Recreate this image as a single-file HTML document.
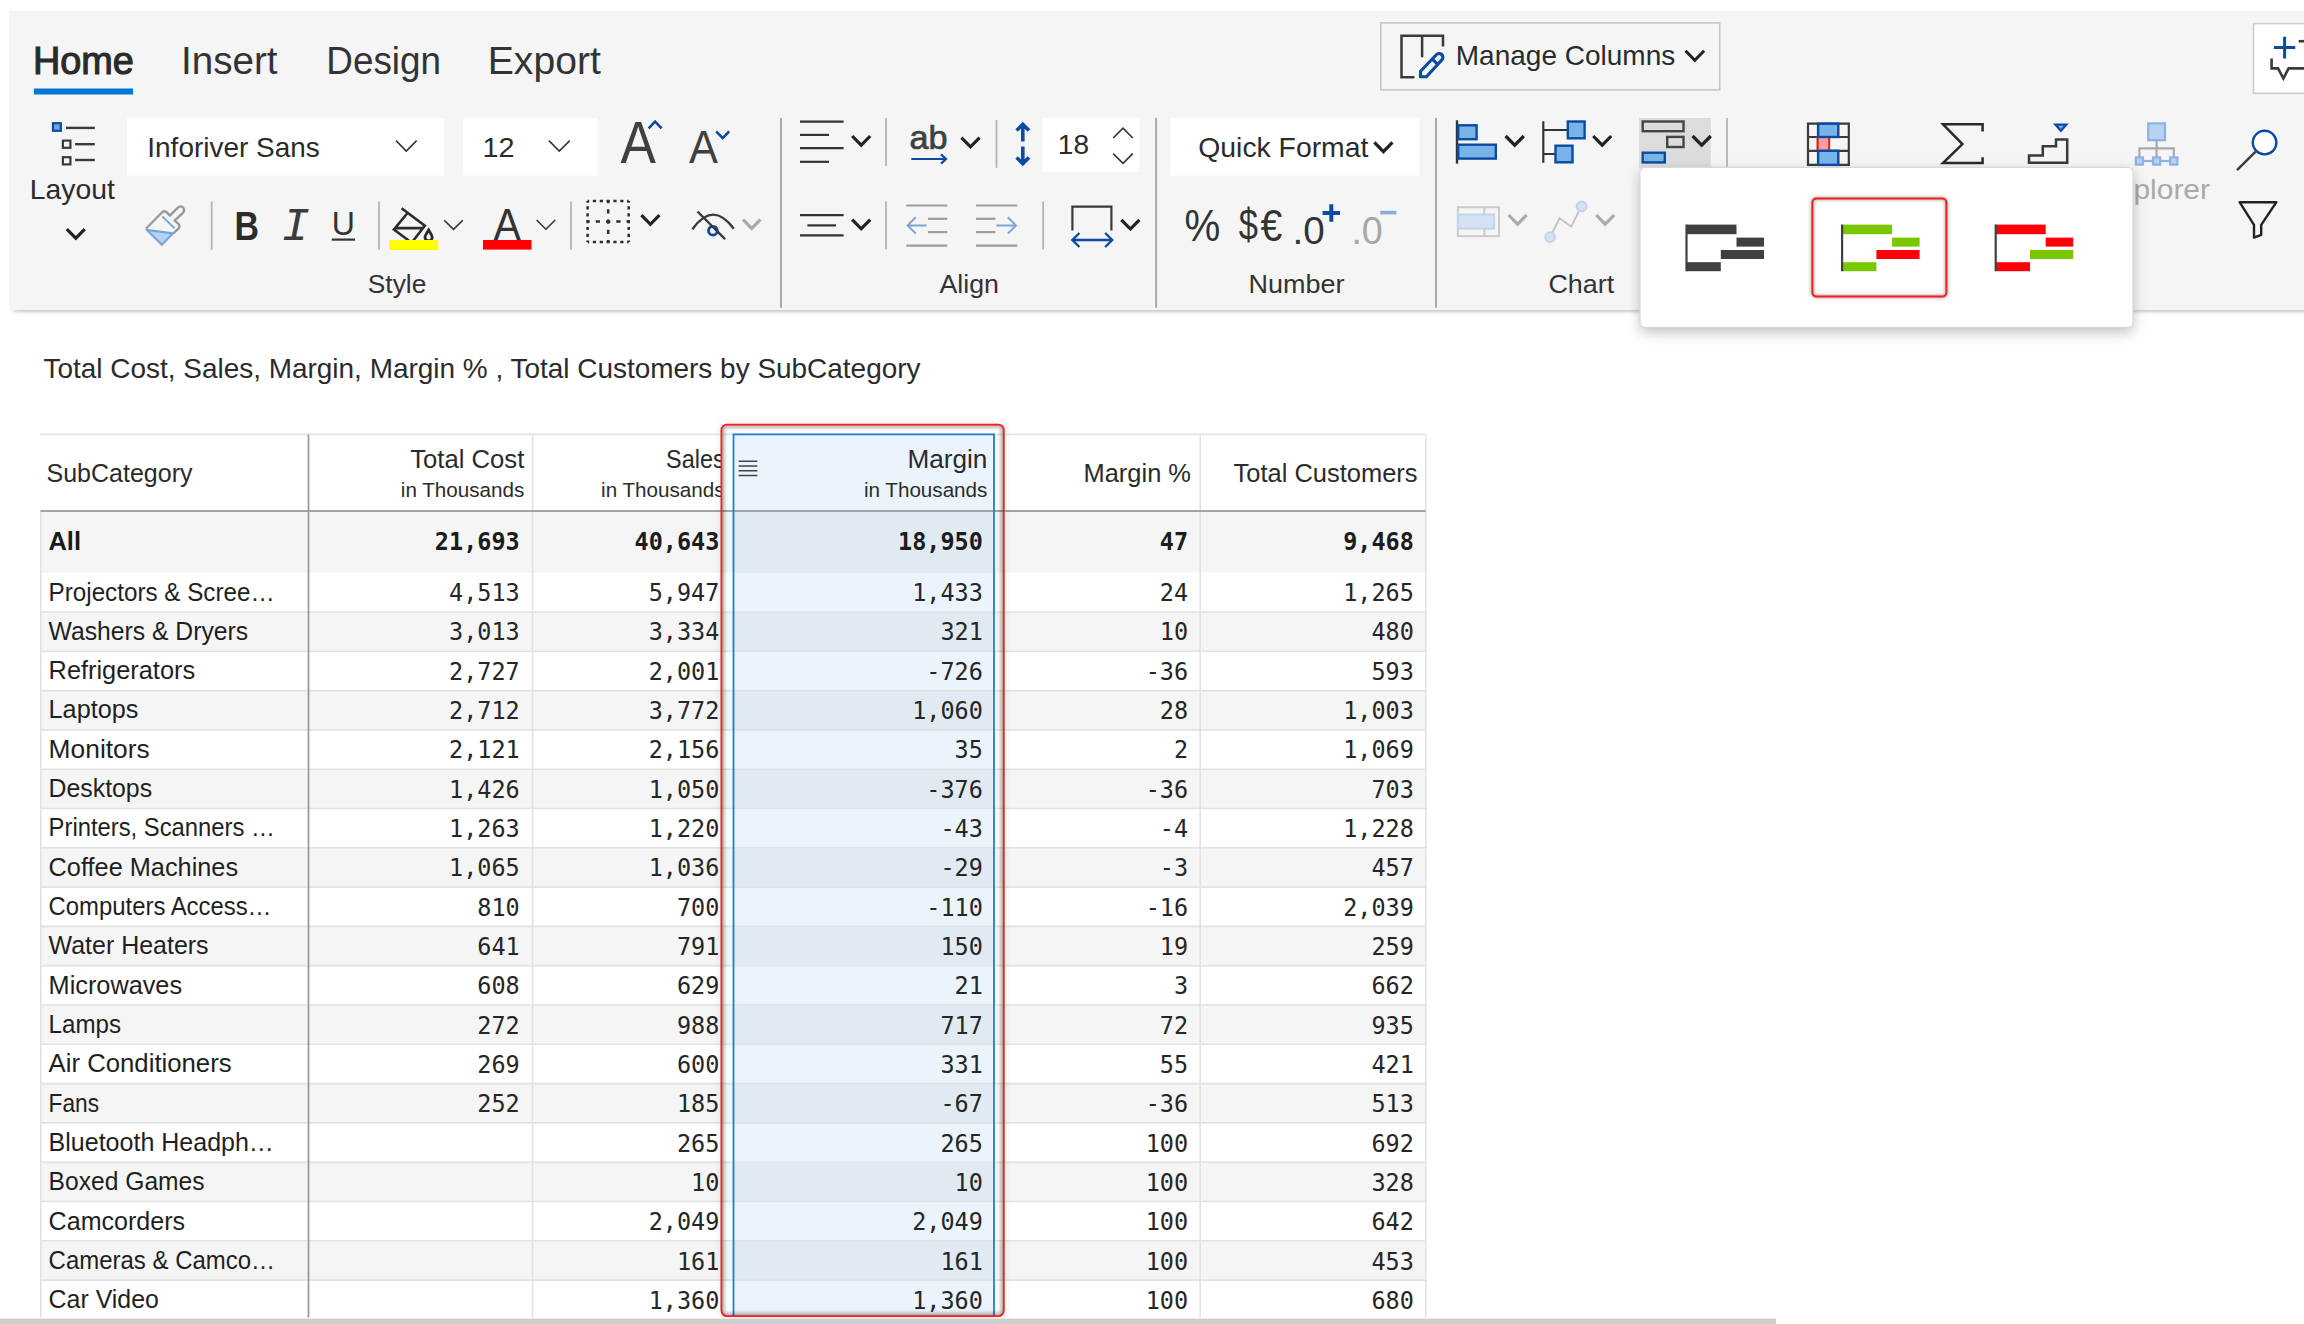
<!DOCTYPE html>
<html lang="en">
<head>
<meta charset="utf-8">
<title>Inforiver - Total Cost, Sales, Margin by SubCategory</title>
<style>
html,body{margin:0;padding:0;background:#fff;}
body{width:2304px;height:1324px;overflow:hidden;position:relative;font-family:'Liberation Sans', sans-serif;}
svg{position:absolute;left:0;top:0;display:block;font-family:'Liberation Sans', sans-serif;}
text{white-space:pre;}
</style>
</head>
<body>
<svg width="2304" height="1324" viewBox="0 0 2304 1324">
<defs>
<filter id="shPop" x="-10%" y="-20%" width="120%" height="150%"><feDropShadow dx="0" dy="5" stdDeviation="6.5" flood-color="#000" flood-opacity="0.25"/></filter>
<filter id="blur3" x="-20%" y="-5%" width="140%" height="110%"><feGaussianBlur stdDeviation="3"/></filter>
<filter id="blurSh" x="-2%" y="-100%" width="104%" height="300%"><feGaussianBlur stdDeviation="2.6"/></filter>
<clipPath id="clipShadow"><rect x="0" y="310" width="2304" height="20"/></clipPath>
<clipPath id="clipTable"><rect x="0" y="400" width="2304" height="917.4"/></clipPath>
<filter id="blur2" x="-20%" y="-20%" width="140%" height="140%"><feGaussianBlur stdDeviation="1.8"/></filter>
<clipPath id="clipSel"><rect x="721.4" y="424.6" width="282.4" height="891.5" rx="5.5"/></clipPath>
<clipPath id="clipSales"><rect x="533" y="436" width="188.6" height="74"/></clipPath>
<clipPath id="clipExplorer"><rect x="2100" y="100" width="204" height="210"/></clipPath>
</defs>
<g id="ribbon">
<g clip-path="url(#clipShadow)"><rect x="14" y="290" width="2300" height="20" fill="#000" fill-opacity="0.5" filter="url(#blurSh)"/></g>
<rect x="8.7" y="10.9" width="2300" height="299.3" fill="#f5f5f5"/>
<g id="tabs">
<text x="32.9" y="73.6" font-size="39" fill="#2a2a2a" textLength="101" lengthAdjust="spacingAndGlyphs" stroke="#2a2a2a" stroke-width="1.1">Home</text>
<rect x="34.00" y="88.50" width="99.00" height="6.00" fill="#0078d4" />
<text x="181" y="73.6" font-size="39" fill="#333" textLength="96.5" lengthAdjust="spacingAndGlyphs">Insert</text>
<text x="326.3" y="73.6" font-size="39" fill="#333" textLength="114.7" lengthAdjust="spacingAndGlyphs">Design</text>
<text x="487.8" y="73.6" font-size="39" fill="#333" textLength="113" lengthAdjust="spacingAndGlyphs">Export</text>
</g>
<g id="manage-columns">
<rect x="1380.8" y="22.9" width="338.9" height="67" fill="#f5f5f5" stroke="#c6c6c6" stroke-width="1.6"/>
<path d="M1414.4 77.2 H1401.5 V35.7 H1443 V46.6 M1422.1 35.7 V57.2" fill="none" stroke="#3a3a3a" stroke-width="2.5"/>
<path d="M1436.3 54.7 L1420.6 71.3 L1420.4 76.8 L1426.4 76.8 L1441.9 59.9 A3.8 3.8 0 0 0 1436.3 54.7 Z M1432 58.8 L1437.8 64.4" fill="none" stroke="#0b4aa2" stroke-width="3.1" stroke-linejoin="round"/>
<text x="1455.8" y="65.1" font-size="27.8" fill="#2b2b2b" textLength="219.4" lengthAdjust="spacingAndGlyphs">Manage Columns</text>
<polyline points="1685.5,50.8 1694.8,60.3 1704.1,50.8" fill="none" stroke="#222" stroke-width="3"/>
</g>
<g id="comment-btn">
<rect x="2253.5" y="23.6" width="80" height="69.7" fill="#fff" stroke="#cccccc" stroke-width="1.6"/>
<path d="M2273.9 47.6 H2295.2 M2284.6 36.7 V58.5" fill="none" stroke="#0b4aa2" stroke-width="3"/>
<path d="M2298.7 41.2 H2310" fill="none" stroke="#3a3a3a" stroke-width="2.6"/>
<path d="M2271.6 58.5 V68.4 H2278 L2283.4 78.4 L2288.6 68.4 H2310" fill="none" stroke="#3a3a3a" stroke-width="2.6"/>
</g>
<g id="layout-btn">
<rect x="53" y="123.2" width="7.8" height="7.6" fill="#6aa6ea" stroke="#0b4aa2" stroke-width="2.2"/>
<line x1="66.00" y1="127.90" x2="94.80" y2="127.90" stroke="#3a3a3a" stroke-width="2.4" />
<rect x="62.9" y="140.6" width="7.5" height="7.2" fill="none" stroke="#3a3a3a" stroke-width="2.2"/>
<line x1="75.10" y1="144.20" x2="94.80" y2="144.20" stroke="#3a3a3a" stroke-width="2.4" />
<rect x="62.9" y="157.2" width="7.5" height="7.2" fill="none" stroke="#3a3a3a" stroke-width="2.2"/>
<line x1="75.10" y1="160.00" x2="94.80" y2="160.00" stroke="#3a3a3a" stroke-width="2.4" />
<text x="29.8" y="199.2" font-size="27.8" fill="#2b2b2b" textLength="85" lengthAdjust="spacingAndGlyphs">Layout</text>
<polyline points="66.8,229.2 75.8,238.2 84.8,229.2" fill="none" stroke="#222" stroke-width="3.2"/>
</g>
<g id="style-group">
<rect x="127.10" y="118.00" width="316.90" height="57.60" fill="#fff" />
<text x="147.3" y="157" font-size="27.8" fill="#2b2b2b" textLength="172.5" lengthAdjust="spacingAndGlyphs">Inforiver Sans</text>
<polyline points="396.0,140.6 406.3,151.0 416.6,140.6" fill="none" stroke="#333" stroke-width="1.6"/>
<rect x="463.30" y="118.00" width="134.00" height="57.60" fill="#fff" />
<text x="482.5" y="157" font-size="27.8" fill="#2b2b2b" textLength="32" lengthAdjust="spacingAndGlyphs">12</text>
<polyline points="548.9,140.6 559.3,151.0 569.7,140.6" fill="none" stroke="#333" stroke-width="1.6"/>
<text x="620.6" y="162.6" font-size="59.6" fill="#404040" textLength="35.4" lengthAdjust="spacingAndGlyphs">A</text>
<polyline points="648.6,128.4 655.1,121.6 661.6,128.4" fill="none" stroke="#0b4aa2" stroke-width="2.6"/>
<text x="689" y="162.6" font-size="46" fill="#404040" textLength="28.9" lengthAdjust="spacingAndGlyphs">A</text>
<polyline points="716.2,131.4 722.7,138.2 729.2,131.4" fill="none" stroke="#0b4aa2" stroke-width="2.6"/>
<g id="format-painter" fill="none" stroke-linejoin="round">
<path d="M145.9 228.8 L162.4 212 Q164.6 210.2 166.8 212.4 L169.8 215.6 L177.9 207.6 A3.6 3.6 0 0 1 183.1 212.6 L174.6 220.6 L178.2 223.6 Q180.6 226 178.6 228.4 L173.4 233.4" stroke="#989898" stroke-width="2.3"/>
<path d="M146.6 229.8 L172.8 233.4 L161.8 244.8 Z" fill="#b5d4f1" stroke="#7ba4d8" stroke-width="2.2"/>
<path d="M162.3 216.4 L174.5 228.2" stroke="#7ba4d8" stroke-width="2"/>
</g>
<line x1="211.70" y1="201.50" x2="211.70" y2="249.70" stroke="#b4b4b4" stroke-width="1.8" />
<text x="234.6" y="239.9" font-size="41.5" fill="#2b2b2b" font-weight="700" textLength="24.5" lengthAdjust="spacingAndGlyphs">B</text>
<text x="281.6" y="240.4" font-size="47" fill="#3c3c3c" font-family="'Liberation Mono', monospace" font-style="italic">I</text>
<text x="331.8" y="234.6" font-size="33.4" fill="#333" textLength="23.2" lengthAdjust="spacingAndGlyphs">U</text>
<line x1="331.80" y1="239.60" x2="355.00" y2="239.60" stroke="#333" stroke-width="2.2" />
<line x1="379.00" y1="201.50" x2="379.00" y2="249.70" stroke="#b4b4b4" stroke-width="1.8" />
<g id="fill-color" fill="none" stroke="#2c2c2c" stroke-width="2.6">
<path d="M401.6 208.2 L424.8 225.8 L412.6 241.5 M407.1 213.5 L393.9 229.6 L410 241.5 M395.4 228.1 H422.6"/>
<path d="M428.6 230 C426.4 233.6 425 235.6 425 237.2 A3.6 3.6 0 0 0 432.2 237.2 C432.2 235.6 430.8 233.6 428.6 230 Z" stroke-width="2.8"/>
</g>
<rect x="389.30" y="240.00" width="49.00" height="10.00" fill="#ffff00" />
<polyline points="444.2,220.2 453.5,229.4 462.8,220.2" fill="none" stroke="#333" stroke-width="1.6"/>
<text x="493.6" y="240.2" font-size="44.6" fill="#333" textLength="27.4" lengthAdjust="spacingAndGlyphs">A</text>
<rect x="483.00" y="240.00" width="48.50" height="9.60" fill="#ff0000" />
<polyline points="536.6,220.0 545.9,229.2 555.2,220.0" fill="none" stroke="#333" stroke-width="1.6"/>
<line x1="571.00" y1="201.50" x2="571.00" y2="249.70" stroke="#b4b4b4" stroke-width="1.8" />
<g id="borders" fill="none" stroke="#2c2c2c" stroke-width="2.5">
<path d="M587.6 201.1 H628.7 M587.6 242.1 H628.7 M587.6 201.1 V242.1 M628.7 201.1 V242.1" stroke-dasharray="3.2 3.65" stroke-dashoffset="1.6"/>
<path d="M608.2 201.1 V242.1 M587.6 221.4 H628.7" stroke-dasharray="4.2 6.07" stroke-dashoffset="2.1"/>
</g>
<polyline points="641.4,215.2 650.4,224.3 659.4,215.2" fill="none" stroke="#222" stroke-width="3.2"/>
<g id="hide" fill="none" stroke="#3a3a3a" stroke-width="2.4">
<circle cx="712.9" cy="230.7" r="4.4" stroke="#0b4aa2" stroke-width="2.8"/>
<path d="M692.4 229.2 Q713 200.2 733.8 228.8"/>
<path d="M697.5 211.5 L725.1 239.2"/>
</g>
<polyline points="743.0,219.6 751.7,228.4 760.4,219.6" fill="none" stroke="#aaaaaa" stroke-width="3.2"/>
<text x="367.8" y="292.5" font-size="25.6" fill="#333" textLength="58.5" lengthAdjust="spacingAndGlyphs">Style</text>
</g>
<line x1="781.00" y1="118.00" x2="781.00" y2="307.80" stroke="#aaaaaa" stroke-width="2" />
<g id="align-group">
<line x1="800.00" y1="121.60" x2="843.60" y2="121.60" stroke="#333" stroke-width="2.2" />
<line x1="800.00" y1="134.90" x2="829.00" y2="134.90" stroke="#333" stroke-width="2.2" />
<line x1="800.00" y1="148.20" x2="843.60" y2="148.20" stroke="#333" stroke-width="2.2" />
<line x1="800.00" y1="161.80" x2="829.00" y2="161.80" stroke="#333" stroke-width="2.2" />
<polyline points="852.2,136.0 861.2,145.2 870.2,136.0" fill="none" stroke="#222" stroke-width="3.2"/>
<line x1="886.00" y1="118.00" x2="886.00" y2="166.00" stroke="#b4b4b4" stroke-width="1.8" />
<text x="909.6" y="149.4" font-size="33" fill="#404040" textLength="38" lengthAdjust="spacingAndGlyphs" stroke="#404040" stroke-width="0.7">ab</text>
<path d="M911.3 159 H945.8 M941 154.4 L946 159 L941 163.6" fill="none" stroke="#0b4aa2" stroke-width="2.2"/>
<polyline points="961.4,137.6 970.5,146.8 979.6,137.6" fill="none" stroke="#222" stroke-width="3.2"/>
<line x1="996.50" y1="120.00" x2="996.50" y2="167.80" stroke="#b4b4b4" stroke-width="1.8" />
<path d="M1022.8 141.6 V126 M1016.6 130.6 L1022.8 124.4 L1029 130.6 M1022.8 146.6 V162 M1016.6 157.4 L1022.8 163.6 L1029 157.4" fill="none" stroke="#0b4aa2" stroke-width="3.6"/>
<rect x="1042.30" y="118.00" width="97.10" height="53.70" fill="#fff" />
<text x="1057.8" y="154.2" font-size="27.4" fill="#2b2b2b" textLength="31.2" lengthAdjust="spacingAndGlyphs">18</text>
<polyline points="1113.2,138.0 1123.0,128.2 1132.8,138.0" fill="none" stroke="#333" stroke-width="1.6"/>
<polyline points="1113.2,153.6 1123.0,163.4 1132.8,153.6" fill="none" stroke="#333" stroke-width="1.6"/>
<line x1="800.00" y1="215.20" x2="843.60" y2="215.20" stroke="#333" stroke-width="2.2" />
<line x1="807.40" y1="225.40" x2="836.00" y2="225.40" stroke="#333" stroke-width="2.2" />
<line x1="800.00" y1="235.40" x2="843.60" y2="235.40" stroke="#333" stroke-width="2.2" />
<polyline points="852.2,219.6 861.2,228.8 870.2,219.6" fill="none" stroke="#222" stroke-width="3.2"/>
<line x1="886.00" y1="201.40" x2="886.00" y2="249.60" stroke="#b4b4b4" stroke-width="1.8" />
<line x1="906.30" y1="205.50" x2="947.30" y2="205.50" stroke="#9d9d9d" stroke-width="2.2" />
<line x1="927.90" y1="218.80" x2="947.30" y2="218.80" stroke="#9d9d9d" stroke-width="2.2" />
<line x1="927.90" y1="232.10" x2="947.30" y2="232.10" stroke="#9d9d9d" stroke-width="2.2" />
<line x1="906.30" y1="245.70" x2="947.30" y2="245.70" stroke="#9d9d9d" stroke-width="2.2" />
<path d="M926.6 225.4 H908 M915.8 217.2 L907.6 225.4 L915.8 233.6" fill="none" stroke="#7fa3d8" stroke-width="2"/>
<line x1="976.00" y1="205.50" x2="1017.30" y2="205.50" stroke="#9d9d9d" stroke-width="2.2" />
<line x1="976.00" y1="218.80" x2="995.40" y2="218.80" stroke="#9d9d9d" stroke-width="2.2" />
<line x1="976.00" y1="232.10" x2="995.40" y2="232.10" stroke="#9d9d9d" stroke-width="2.2" />
<line x1="976.00" y1="245.70" x2="1017.30" y2="245.70" stroke="#9d9d9d" stroke-width="2.2" />
<path d="M996.4 225.4 H1015.6 M1007.8 217.2 L1016 225.4 L1007.8 233.6" fill="none" stroke="#7fa3d8" stroke-width="2"/>
<line x1="1043.10" y1="201.40" x2="1043.10" y2="249.60" stroke="#b4b4b4" stroke-width="1.8" />
<path d="M1072.4 230.4 V206.6 H1111.4 V230.4" fill="none" stroke="#3a3a3a" stroke-width="2.2"/>
<path d="M1072.6 240 H1112 M1079.4 233 L1072.4 240 L1079.4 247 M1105.2 233 L1112.2 240 L1105.2 247" fill="none" stroke="#0b4aa2" stroke-width="2.4"/>
<polyline points="1121.4,219.8 1130.4,229.0 1139.4,219.8" fill="none" stroke="#222" stroke-width="3.2"/>
<text x="939.5" y="292.5" font-size="25.6" fill="#333" textLength="59.5" lengthAdjust="spacingAndGlyphs">Align</text>
</g>
<line x1="1156.10" y1="118.00" x2="1156.10" y2="307.80" stroke="#aaaaaa" stroke-width="2" />
<g id="number-group">
<rect x="1170.40" y="118.00" width="248.80" height="57.60" fill="#fff" />
<text x="1198.3" y="156.5" font-size="27.8" fill="#2b2b2b" textLength="170" lengthAdjust="spacingAndGlyphs">Quick Format</text>
<polyline points="1374.4,142.4 1383.4,151.6 1392.4,142.4" fill="none" stroke="#222" stroke-width="3.2"/>
<text x="1184.6" y="241.3" font-size="43.6" fill="#333" textLength="35.8" lengthAdjust="spacingAndGlyphs">%</text>
<text x="1238.8" y="239.6" font-size="44.5" fill="#333" textLength="19.2" lengthAdjust="spacingAndGlyphs">$</text>
<text x="1260.6" y="241.3" font-size="43.6" fill="#333" textLength="21.8" lengthAdjust="spacingAndGlyphs">€</text>
<text x="1292.6" y="243.6" font-size="38.5" fill="#333" textLength="32.2" lengthAdjust="spacingAndGlyphs">.0</text>
<path d="M1322.6 213 H1340 M1331.3 204.3 V221.8" fill="none" stroke="#0b4aa2" stroke-width="4"/>
<text x="1351.4" y="243.6" font-size="38.5" fill="#a6a6a6" textLength="31.4" lengthAdjust="spacingAndGlyphs">.0</text>
<line x1="1380.30" y1="212.60" x2="1396.40" y2="212.60" stroke="#8cabdc" stroke-width="3.6" />
<text x="1248.6" y="292.5" font-size="25.6" fill="#333" textLength="96" lengthAdjust="spacingAndGlyphs">Number</text>
</g>
<line x1="1436.00" y1="118.00" x2="1436.00" y2="307.80" stroke="#aaaaaa" stroke-width="2" />
<g id="chart-group">
<line x1="1457.00" y1="120.30" x2="1457.00" y2="163.60" stroke="#333" stroke-width="2.4" />
<rect x="1458.2" y="125.3" width="18.4" height="13.9" fill="#78b3e8" stroke="#0b4aa2" stroke-width="2.4"/>
<rect x="1458.2" y="144.7" width="37.6" height="13.9" fill="#78b3e8" stroke="#0b4aa2" stroke-width="2.4"/>
<polyline points="1505.6,136.0 1514.7,145.2 1523.8,136.0" fill="none" stroke="#222" stroke-width="3.2"/>
<path d="M1543.3 121.3 V162.8 M1543.3 130 H1567 M1543.3 154 H1555" fill="none" stroke="#333" stroke-width="2.2"/>
<rect x="1567.8" y="121.5" width="16.8" height="16.8" fill="#78b3e8" stroke="#0b4aa2" stroke-width="2.4"/>
<rect x="1555.5" y="145.7" width="17" height="16.6" fill="#78b3e8" stroke="#0b4aa2" stroke-width="2.4"/>
<polyline points="1593.2,136.0 1602.2,145.2 1611.2,136.0" fill="none" stroke="#222" stroke-width="3.2"/>
<rect x="1639.00" y="118.00" width="71.80" height="50.00" fill="#dcdcdc" />
<rect x="1642.7" y="121.5" width="40.8" height="9.7" fill="none" stroke="#444" stroke-width="2.4"/>
<rect x="1667.2" y="136.9" width="16.3" height="10.1" fill="none" stroke="#444" stroke-width="2.4"/>
<rect x="1642.7" y="152.7" width="22.1" height="9.7" fill="#78b3e8" stroke="#0b4aa2" stroke-width="2.4"/>
<polyline points="1692.6,136.0 1701.7,145.2 1710.8,136.0" fill="none" stroke="#222" stroke-width="3.2"/>
<line x1="1727.00" y1="118.00" x2="1727.00" y2="170.00" stroke="#b4b4b4" stroke-width="1.8" />
<rect x="1457.9" y="207.3" width="41.1" height="28.8" fill="none" stroke="#cbcbcb" stroke-width="2"/>
<line x1="1484.30" y1="207.30" x2="1484.30" y2="236.10" stroke="#cbcbcb" stroke-width="2" />
<rect x="1457.9" y="214.5" width="36.2" height="14.1" fill="#d3e3f4" stroke="#c3d3ec" stroke-width="2"/>
<polyline points="1508.6,215.0 1517.6,224.2 1526.6,215.0" fill="none" stroke="#aaaaaa" stroke-width="3.2"/>
<polyline points="1550.1,237.1 1559.6,218.3 1571.2,226.6 1581.5,206.3" fill="none" stroke="#c4c4c4" stroke-width="2"/>
<circle cx="1550.1" cy="237.1" r="4.9" fill="#d3e3f4" stroke="#c3d3ec" stroke-width="2"/>
<circle cx="1581.5" cy="206.3" r="4.9" fill="#d3e3f4" stroke="#c3d3ec" stroke-width="2"/>
<polyline points="1596.2,215.0 1605.2,224.2 1614.2,215.0" fill="none" stroke="#aaaaaa" stroke-width="3.2"/>
<text x="1548.4" y="292.5" font-size="25.6" fill="#333" textLength="65.8" lengthAdjust="spacingAndGlyphs">Chart</text>
</g>
<g id="right-icons">
<rect x="1817.4" y="138" width="12" height="11.8" fill="#ff9ca4"/>
<line x1="1817.60" y1="138.00" x2="1817.60" y2="149.80" stroke="#d4261c" stroke-width="2.2" />
<line x1="1829.20" y1="138.00" x2="1829.20" y2="149.80" stroke="#d4261c" stroke-width="2" />
<path d="M1808 123.7 H1848.8 V164.9 H1808 Z M1808 137 H1848.8 M1808 150.8 H1848.8" fill="none" stroke="#3a3a3a" stroke-width="2.2"/>
<rect x="1818.1" y="123.7" width="20.2" height="13.3" fill="#78b3e8" stroke="#0b4aa2" stroke-width="2.4"/>
<rect x="1818.1" y="150.8" width="20.2" height="14.1" fill="#78b3e8" stroke="#0b4aa2" stroke-width="2.4"/>
<path d="M1982.6 131.6 V124.3 H1943 L1962.4 144.1 L1943 163.1 H1982.6 V157.2" fill="none" stroke="#2a2a2a" stroke-width="2.5" stroke-linejoin="miter"/>
<path d="M2029 162.7 V155.4 H2042.8 V146.2 H2056 V139.4 H2067.2 V162.7 Z" fill="none" stroke="#3a3a3a" stroke-width="2.5"/>
<path d="M2055.4 124.6 H2066.4 L2060.9 130.8 Z" fill="#78b3e8" stroke="#0b4aa2" stroke-width="2.2"/>
<path d="M2156.6 141 V157 M2139.4 157 V148.4 H2173.8 V157" fill="none" stroke="#a9a9a9" stroke-width="2.2"/>
<path d="M2143 161 H2170" fill="none" stroke="#8fb1e0" stroke-width="2.2"/>
<rect x="2148.2" y="123.4" width="16.8" height="16.8" fill="#b5d3f2" stroke="#8fb1e0" stroke-width="2.2"/>
<rect x="2135.8" y="157.4" width="7.2" height="7.2" fill="#b5d3f2" stroke="#8fb1e0" stroke-width="2.2"/>
<rect x="2153.0" y="157.4" width="7.2" height="7.2" fill="#b5d3f2" stroke="#8fb1e0" stroke-width="2.2"/>
<rect x="2170.2000000000003" y="157.4" width="7.2" height="7.2" fill="#b5d3f2" stroke="#8fb1e0" stroke-width="2.2"/>
<g clip-path="url(#clipExplorer)">
<text x="2098.5" y="198.9" font-size="27.8" fill="#a9a9a9" textLength="111.5" lengthAdjust="spacingAndGlyphs">Explorer</text>
</g>
<path d="M2255.6 151.6 L2237 170.2" fill="none" stroke="#3a3a3a" stroke-width="2.4"/>
<circle cx="2264.6" cy="142.6" r="11.8" fill="#fff" stroke="#0b4aa2" stroke-width="2.4"/>
<path d="M2239.6 202.2 H2276.4 L2261.2 224.8 V234.8 L2254 237.6 V224.8 Z" fill="none" stroke="#222" stroke-width="2.4" stroke-linejoin="round"/>
</g>
</g>
<g id="waterfall-popup">
<rect x="1640" y="167.3" width="493" height="160" rx="5" fill="#fff" filter="url(#shPop)"/>
<rect x="1640" y="167.3" width="493" height="160" rx="5" fill="#fff" stroke="#d9d9d9" stroke-width="1.2"/>
<rect x="1686.20" y="224.60" width="50.30" height="9.60" fill="#404040" />
<rect x="1736.50" y="237.60" width="27.50" height="9.00" fill="#404040" />
<rect x="1720.80" y="250.00" width="43.20" height="9.00" fill="#404040" />
<rect x="1686.20" y="262.20" width="34.60" height="9.00" fill="#404040" />
<rect x="1685.40" y="224.60" width="2.20" height="46.60" fill="#404040" />
<rect x="1812.4" y="198.6" width="134" height="98" rx="4" fill="#fff" stroke="#000" stroke-opacity="0.3" stroke-width="4" filter="url(#blur2)"/>
<rect x="1812.4" y="198.6" width="134" height="98" rx="4" fill="none" stroke="#fb1c1c" stroke-width="2"/>
<rect x="1841.80" y="224.60" width="50.30" height="9.60" fill="#7ac700" />
<rect x="1892.10" y="237.60" width="27.50" height="9.00" fill="#7ac700" />
<rect x="1876.40" y="250.00" width="43.20" height="9.00" fill="#ff0008" />
<rect x="1841.80" y="262.20" width="34.60" height="9.00" fill="#7ac700" />
<rect x="1841.00" y="224.60" width="2.20" height="46.60" fill="#404040" />
<rect x="1995.40" y="224.60" width="50.30" height="9.60" fill="#ff0008" />
<rect x="2045.70" y="237.60" width="27.50" height="9.00" fill="#ff0008" />
<rect x="2030.00" y="250.00" width="43.20" height="9.00" fill="#7ac700" />
<rect x="1995.40" y="262.20" width="34.60" height="9.00" fill="#ff0008" />
<rect x="1994.60" y="224.60" width="2.20" height="46.60" fill="#404040" />
</g>
<g id="title">
<text x="43.5" y="377.9" font-size="27.4" fill="#2b2b2b" textLength="877" lengthAdjust="spacingAndGlyphs">Total Cost, Sales, Margin, Margin % , Total Customers by SubCategory</text>
</g>
<g id="table" clip-path="url(#clipTable)">
<rect x="40.40" y="511.00" width="1385.40" height="61.70" fill="#f5f5f5" />
<rect x="40.40" y="612.00" width="1385.40" height="39.30" fill="#f5f5f5" />
<rect x="40.40" y="690.60" width="1385.40" height="39.30" fill="#f5f5f5" />
<rect x="40.40" y="769.20" width="1385.40" height="39.30" fill="#f5f5f5" />
<rect x="40.40" y="847.80" width="1385.40" height="39.30" fill="#f5f5f5" />
<rect x="40.40" y="926.40" width="1385.40" height="39.30" fill="#f5f5f5" />
<rect x="40.40" y="1005.00" width="1385.40" height="39.30" fill="#f5f5f5" />
<rect x="40.40" y="1083.60" width="1385.40" height="39.30" fill="#f5f5f5" />
<rect x="40.40" y="1162.20" width="1385.40" height="39.30" fill="#f5f5f5" />
<rect x="40.40" y="1240.80" width="1385.40" height="39.30" fill="#f5f5f5" />
<rect x="733.50" y="434.40" width="260.50" height="889.60" fill="rgba(0,120,212,0.08)" />
<line x1="40.40" y1="434.40" x2="1425.80" y2="434.40" stroke="#e2e2e2" stroke-width="1.6" />
<line x1="40.40" y1="612.00" x2="1425.80" y2="612.00" stroke="#e2e2e2" stroke-width="1.6" />
<line x1="40.40" y1="651.30" x2="1425.80" y2="651.30" stroke="#e2e2e2" stroke-width="1.6" />
<line x1="40.40" y1="690.60" x2="1425.80" y2="690.60" stroke="#e2e2e2" stroke-width="1.6" />
<line x1="40.40" y1="729.90" x2="1425.80" y2="729.90" stroke="#e2e2e2" stroke-width="1.6" />
<line x1="40.40" y1="769.20" x2="1425.80" y2="769.20" stroke="#e2e2e2" stroke-width="1.6" />
<line x1="40.40" y1="808.50" x2="1425.80" y2="808.50" stroke="#e2e2e2" stroke-width="1.6" />
<line x1="40.40" y1="847.80" x2="1425.80" y2="847.80" stroke="#e2e2e2" stroke-width="1.6" />
<line x1="40.40" y1="887.10" x2="1425.80" y2="887.10" stroke="#e2e2e2" stroke-width="1.6" />
<line x1="40.40" y1="926.40" x2="1425.80" y2="926.40" stroke="#e2e2e2" stroke-width="1.6" />
<line x1="40.40" y1="965.70" x2="1425.80" y2="965.70" stroke="#e2e2e2" stroke-width="1.6" />
<line x1="40.40" y1="1005.00" x2="1425.80" y2="1005.00" stroke="#e2e2e2" stroke-width="1.6" />
<line x1="40.40" y1="1044.30" x2="1425.80" y2="1044.30" stroke="#e2e2e2" stroke-width="1.6" />
<line x1="40.40" y1="1083.60" x2="1425.80" y2="1083.60" stroke="#e2e2e2" stroke-width="1.6" />
<line x1="40.40" y1="1122.90" x2="1425.80" y2="1122.90" stroke="#e2e2e2" stroke-width="1.6" />
<line x1="40.40" y1="1162.20" x2="1425.80" y2="1162.20" stroke="#e2e2e2" stroke-width="1.6" />
<line x1="40.40" y1="1201.50" x2="1425.80" y2="1201.50" stroke="#e2e2e2" stroke-width="1.6" />
<line x1="40.40" y1="1240.80" x2="1425.80" y2="1240.80" stroke="#e2e2e2" stroke-width="1.6" />
<line x1="40.40" y1="1280.10" x2="1425.80" y2="1280.10" stroke="#e2e2e2" stroke-width="1.6" />
<line x1="40.40" y1="1319.40" x2="1425.80" y2="1319.40" stroke="#e2e2e2" stroke-width="1.6" />
<line x1="40.80" y1="511.00" x2="40.80" y2="1324.00" stroke="#e2e2e2" stroke-width="1.6" />
<line x1="532.60" y1="434.40" x2="532.60" y2="1324.00" stroke="#e2e2e2" stroke-width="1.6" />
<line x1="1200.20" y1="434.40" x2="1200.20" y2="1324.00" stroke="#e2e2e2" stroke-width="1.6" />
<line x1="1425.80" y1="434.40" x2="1425.80" y2="1324.00" stroke="#e2e2e2" stroke-width="1.6" />
<line x1="308.50" y1="434.40" x2="308.50" y2="1324.00" stroke="#9c9c9c" stroke-width="1.8" />
<line x1="40.40" y1="511.00" x2="1425.80" y2="511.00" stroke="#a3a3a3" stroke-width="2" />
<text x="46.5" y="481.6" font-size="25" fill="#2b2b2b" textLength="146" lengthAdjust="spacingAndGlyphs">SubCategory</text>
<text x="524.3" y="467.7" font-size="25" fill="#2b2b2b" text-anchor="end" textLength="114" lengthAdjust="spacingAndGlyphs">Total Cost</text>
<text x="524.3" y="496.6" font-size="19.3" fill="#2b2b2b" text-anchor="end" textLength="123.5" lengthAdjust="spacingAndGlyphs">in Thousands</text>
<g clip-path="url(#clipSales)">
<text x="724.6" y="467.7" font-size="25" fill="#2b2b2b" text-anchor="end" textLength="58.5" lengthAdjust="spacingAndGlyphs">Sales</text>
<text x="724.6" y="496.6" font-size="19.3" fill="#2b2b2b" text-anchor="end" textLength="123.5" lengthAdjust="spacingAndGlyphs">in Thousands</text>
</g>
<text x="987.4" y="467.7" font-size="25" fill="#2b2b2b" text-anchor="end" textLength="80" lengthAdjust="spacingAndGlyphs">Margin</text>
<text x="987.4" y="496.6" font-size="19.3" fill="#2b2b2b" text-anchor="end" textLength="123.5" lengthAdjust="spacingAndGlyphs">in Thousands</text>
<text x="1191" y="481.6" font-size="25" fill="#2b2b2b" text-anchor="end" textLength="107.5" lengthAdjust="spacingAndGlyphs">Margin %</text>
<text x="1417.6" y="481.6" font-size="25" fill="#2b2b2b" text-anchor="end" textLength="184" lengthAdjust="spacingAndGlyphs">Total Customers</text>
<line x1="738.60" y1="461.20" x2="757.40" y2="461.20" stroke="#444" stroke-width="1.4" />
<line x1="738.60" y1="465.95" x2="757.40" y2="465.95" stroke="#444" stroke-width="1.4" />
<line x1="738.60" y1="470.70" x2="757.40" y2="470.70" stroke="#444" stroke-width="1.4" />
<line x1="738.60" y1="475.45" x2="757.40" y2="475.45" stroke="#444" stroke-width="1.4" />
<text x="48.5" y="549.6" font-size="25" fill="#1a1a1a" font-weight="700" textLength="32.5" lengthAdjust="spacingAndGlyphs">All</text>
<text transform="translate(519.7 549.8) scale(1 1.055)" font-size="23.5" fill="#1c1c1c" text-anchor="end" font-weight="700" font-family="'DejaVu Sans Mono', 'Liberation Mono', monospace">21,693</text>
<text transform="translate(719.4000000000001 549.8) scale(1 1.055)" font-size="23.5" fill="#1c1c1c" text-anchor="end" font-weight="700" font-family="'DejaVu Sans Mono', 'Liberation Mono', monospace">40,643</text>
<text transform="translate(982.9000000000001 549.8) scale(1 1.055)" font-size="23.5" fill="#1c1c1c" text-anchor="end" font-weight="700" font-family="'DejaVu Sans Mono', 'Liberation Mono', monospace">18,950</text>
<text transform="translate(1188.1000000000001 549.8) scale(1 1.055)" font-size="23.5" fill="#1c1c1c" text-anchor="end" font-weight="700" font-family="'DejaVu Sans Mono', 'Liberation Mono', monospace">47</text>
<text transform="translate(1413.9 549.8) scale(1 1.055)" font-size="23.5" fill="#1c1c1c" text-anchor="end" font-weight="700" font-family="'DejaVu Sans Mono', 'Liberation Mono', monospace">9,468</text>
<text x="48.6" y="600.5" font-size="25" fill="#1f1f1f" textLength="226.0" lengthAdjust="spacingAndGlyphs">Projectors &amp; Scree…</text>
<text transform="translate(519.7 600.9) scale(1 1.065)" font-size="23.5" fill="#262626" text-anchor="end" font-family="'DejaVu Sans Mono', 'Liberation Mono', monospace">4,513</text>
<text transform="translate(719.4000000000001 600.9) scale(1 1.065)" font-size="23.5" fill="#262626" text-anchor="end" font-family="'DejaVu Sans Mono', 'Liberation Mono', monospace">5,947</text>
<text transform="translate(982.9000000000001 600.9) scale(1 1.065)" font-size="23.5" fill="#262626" text-anchor="end" font-family="'DejaVu Sans Mono', 'Liberation Mono', monospace">1,433</text>
<text transform="translate(1188.1000000000001 600.9) scale(1 1.065)" font-size="23.5" fill="#262626" text-anchor="end" font-family="'DejaVu Sans Mono', 'Liberation Mono', monospace">24</text>
<text transform="translate(1413.9 600.9) scale(1 1.065)" font-size="23.5" fill="#262626" text-anchor="end" font-family="'DejaVu Sans Mono', 'Liberation Mono', monospace">1,265</text>
<text x="48.6" y="639.83" font-size="25" fill="#1f1f1f" textLength="199.5" lengthAdjust="spacingAndGlyphs">Washers &amp; Dryers</text>
<text transform="translate(519.7 640.23) scale(1 1.065)" font-size="23.5" fill="#262626" text-anchor="end" font-family="'DejaVu Sans Mono', 'Liberation Mono', monospace">3,013</text>
<text transform="translate(719.4000000000001 640.23) scale(1 1.065)" font-size="23.5" fill="#262626" text-anchor="end" font-family="'DejaVu Sans Mono', 'Liberation Mono', monospace">3,334</text>
<text transform="translate(982.9000000000001 640.23) scale(1 1.065)" font-size="23.5" fill="#262626" text-anchor="end" font-family="'DejaVu Sans Mono', 'Liberation Mono', monospace">321</text>
<text transform="translate(1188.1000000000001 640.23) scale(1 1.065)" font-size="23.5" fill="#262626" text-anchor="end" font-family="'DejaVu Sans Mono', 'Liberation Mono', monospace">10</text>
<text transform="translate(1413.9 640.23) scale(1 1.065)" font-size="23.5" fill="#262626" text-anchor="end" font-family="'DejaVu Sans Mono', 'Liberation Mono', monospace">480</text>
<text x="48.6" y="679.16" font-size="25" fill="#1f1f1f" textLength="146.5" lengthAdjust="spacingAndGlyphs">Refrigerators</text>
<text transform="translate(519.7 679.56) scale(1 1.065)" font-size="23.5" fill="#262626" text-anchor="end" font-family="'DejaVu Sans Mono', 'Liberation Mono', monospace">2,727</text>
<text transform="translate(719.4000000000001 679.56) scale(1 1.065)" font-size="23.5" fill="#262626" text-anchor="end" font-family="'DejaVu Sans Mono', 'Liberation Mono', monospace">2,001</text>
<text transform="translate(982.9000000000001 679.56) scale(1 1.065)" font-size="23.5" fill="#262626" text-anchor="end" font-family="'DejaVu Sans Mono', 'Liberation Mono', monospace">-726</text>
<text transform="translate(1188.1000000000001 679.56) scale(1 1.065)" font-size="23.5" fill="#262626" text-anchor="end" font-family="'DejaVu Sans Mono', 'Liberation Mono', monospace">-36</text>
<text transform="translate(1413.9 679.56) scale(1 1.065)" font-size="23.5" fill="#262626" text-anchor="end" font-family="'DejaVu Sans Mono', 'Liberation Mono', monospace">593</text>
<text x="48.6" y="718.49" font-size="25" fill="#1f1f1f" textLength="89.7" lengthAdjust="spacingAndGlyphs">Laptops</text>
<text transform="translate(519.7 718.89) scale(1 1.065)" font-size="23.5" fill="#262626" text-anchor="end" font-family="'DejaVu Sans Mono', 'Liberation Mono', monospace">2,712</text>
<text transform="translate(719.4000000000001 718.89) scale(1 1.065)" font-size="23.5" fill="#262626" text-anchor="end" font-family="'DejaVu Sans Mono', 'Liberation Mono', monospace">3,772</text>
<text transform="translate(982.9000000000001 718.89) scale(1 1.065)" font-size="23.5" fill="#262626" text-anchor="end" font-family="'DejaVu Sans Mono', 'Liberation Mono', monospace">1,060</text>
<text transform="translate(1188.1000000000001 718.89) scale(1 1.065)" font-size="23.5" fill="#262626" text-anchor="end" font-family="'DejaVu Sans Mono', 'Liberation Mono', monospace">28</text>
<text transform="translate(1413.9 718.89) scale(1 1.065)" font-size="23.5" fill="#262626" text-anchor="end" font-family="'DejaVu Sans Mono', 'Liberation Mono', monospace">1,003</text>
<text x="48.6" y="757.82" font-size="25" fill="#1f1f1f" textLength="101.1" lengthAdjust="spacingAndGlyphs">Monitors</text>
<text transform="translate(519.7 758.22) scale(1 1.065)" font-size="23.5" fill="#262626" text-anchor="end" font-family="'DejaVu Sans Mono', 'Liberation Mono', monospace">2,121</text>
<text transform="translate(719.4000000000001 758.22) scale(1 1.065)" font-size="23.5" fill="#262626" text-anchor="end" font-family="'DejaVu Sans Mono', 'Liberation Mono', monospace">2,156</text>
<text transform="translate(982.9000000000001 758.22) scale(1 1.065)" font-size="23.5" fill="#262626" text-anchor="end" font-family="'DejaVu Sans Mono', 'Liberation Mono', monospace">35</text>
<text transform="translate(1188.1000000000001 758.22) scale(1 1.065)" font-size="23.5" fill="#262626" text-anchor="end" font-family="'DejaVu Sans Mono', 'Liberation Mono', monospace">2</text>
<text transform="translate(1413.9 758.22) scale(1 1.065)" font-size="23.5" fill="#262626" text-anchor="end" font-family="'DejaVu Sans Mono', 'Liberation Mono', monospace">1,069</text>
<text x="48.6" y="797.15" font-size="25" fill="#1f1f1f" textLength="103.5" lengthAdjust="spacingAndGlyphs">Desktops</text>
<text transform="translate(519.7 797.55) scale(1 1.065)" font-size="23.5" fill="#262626" text-anchor="end" font-family="'DejaVu Sans Mono', 'Liberation Mono', monospace">1,426</text>
<text transform="translate(719.4000000000001 797.55) scale(1 1.065)" font-size="23.5" fill="#262626" text-anchor="end" font-family="'DejaVu Sans Mono', 'Liberation Mono', monospace">1,050</text>
<text transform="translate(982.9000000000001 797.55) scale(1 1.065)" font-size="23.5" fill="#262626" text-anchor="end" font-family="'DejaVu Sans Mono', 'Liberation Mono', monospace">-376</text>
<text transform="translate(1188.1000000000001 797.55) scale(1 1.065)" font-size="23.5" fill="#262626" text-anchor="end" font-family="'DejaVu Sans Mono', 'Liberation Mono', monospace">-36</text>
<text transform="translate(1413.9 797.55) scale(1 1.065)" font-size="23.5" fill="#262626" text-anchor="end" font-family="'DejaVu Sans Mono', 'Liberation Mono', monospace">703</text>
<text x="48.6" y="836.48" font-size="25" fill="#1f1f1f" textLength="226.2" lengthAdjust="spacingAndGlyphs">Printers, Scanners …</text>
<text transform="translate(519.7 836.88) scale(1 1.065)" font-size="23.5" fill="#262626" text-anchor="end" font-family="'DejaVu Sans Mono', 'Liberation Mono', monospace">1,263</text>
<text transform="translate(719.4000000000001 836.88) scale(1 1.065)" font-size="23.5" fill="#262626" text-anchor="end" font-family="'DejaVu Sans Mono', 'Liberation Mono', monospace">1,220</text>
<text transform="translate(982.9000000000001 836.88) scale(1 1.065)" font-size="23.5" fill="#262626" text-anchor="end" font-family="'DejaVu Sans Mono', 'Liberation Mono', monospace">-43</text>
<text transform="translate(1188.1000000000001 836.88) scale(1 1.065)" font-size="23.5" fill="#262626" text-anchor="end" font-family="'DejaVu Sans Mono', 'Liberation Mono', monospace">-4</text>
<text transform="translate(1413.9 836.88) scale(1 1.065)" font-size="23.5" fill="#262626" text-anchor="end" font-family="'DejaVu Sans Mono', 'Liberation Mono', monospace">1,228</text>
<text x="48.6" y="875.8100000000001" font-size="25" fill="#1f1f1f" textLength="189.5" lengthAdjust="spacingAndGlyphs">Coffee Machines</text>
<text transform="translate(519.7 876.21) scale(1 1.065)" font-size="23.5" fill="#262626" text-anchor="end" font-family="'DejaVu Sans Mono', 'Liberation Mono', monospace">1,065</text>
<text transform="translate(719.4000000000001 876.21) scale(1 1.065)" font-size="23.5" fill="#262626" text-anchor="end" font-family="'DejaVu Sans Mono', 'Liberation Mono', monospace">1,036</text>
<text transform="translate(982.9000000000001 876.21) scale(1 1.065)" font-size="23.5" fill="#262626" text-anchor="end" font-family="'DejaVu Sans Mono', 'Liberation Mono', monospace">-29</text>
<text transform="translate(1188.1000000000001 876.21) scale(1 1.065)" font-size="23.5" fill="#262626" text-anchor="end" font-family="'DejaVu Sans Mono', 'Liberation Mono', monospace">-3</text>
<text transform="translate(1413.9 876.21) scale(1 1.065)" font-size="23.5" fill="#262626" text-anchor="end" font-family="'DejaVu Sans Mono', 'Liberation Mono', monospace">457</text>
<text x="48.6" y="915.14" font-size="25" fill="#1f1f1f" textLength="222.9" lengthAdjust="spacingAndGlyphs">Computers Access…</text>
<text transform="translate(519.7 915.54) scale(1 1.065)" font-size="23.5" fill="#262626" text-anchor="end" font-family="'DejaVu Sans Mono', 'Liberation Mono', monospace">810</text>
<text transform="translate(719.4000000000001 915.54) scale(1 1.065)" font-size="23.5" fill="#262626" text-anchor="end" font-family="'DejaVu Sans Mono', 'Liberation Mono', monospace">700</text>
<text transform="translate(982.9000000000001 915.54) scale(1 1.065)" font-size="23.5" fill="#262626" text-anchor="end" font-family="'DejaVu Sans Mono', 'Liberation Mono', monospace">-110</text>
<text transform="translate(1188.1000000000001 915.54) scale(1 1.065)" font-size="23.5" fill="#262626" text-anchor="end" font-family="'DejaVu Sans Mono', 'Liberation Mono', monospace">-16</text>
<text transform="translate(1413.9 915.54) scale(1 1.065)" font-size="23.5" fill="#262626" text-anchor="end" font-family="'DejaVu Sans Mono', 'Liberation Mono', monospace">2,039</text>
<text x="48.6" y="954.4699999999999" font-size="25" fill="#1f1f1f" textLength="160.0" lengthAdjust="spacingAndGlyphs">Water Heaters</text>
<text transform="translate(519.7 954.8699999999999) scale(1 1.065)" font-size="23.5" fill="#262626" text-anchor="end" font-family="'DejaVu Sans Mono', 'Liberation Mono', monospace">641</text>
<text transform="translate(719.4000000000001 954.8699999999999) scale(1 1.065)" font-size="23.5" fill="#262626" text-anchor="end" font-family="'DejaVu Sans Mono', 'Liberation Mono', monospace">791</text>
<text transform="translate(982.9000000000001 954.8699999999999) scale(1 1.065)" font-size="23.5" fill="#262626" text-anchor="end" font-family="'DejaVu Sans Mono', 'Liberation Mono', monospace">150</text>
<text transform="translate(1188.1000000000001 954.8699999999999) scale(1 1.065)" font-size="23.5" fill="#262626" text-anchor="end" font-family="'DejaVu Sans Mono', 'Liberation Mono', monospace">19</text>
<text transform="translate(1413.9 954.8699999999999) scale(1 1.065)" font-size="23.5" fill="#262626" text-anchor="end" font-family="'DejaVu Sans Mono', 'Liberation Mono', monospace">259</text>
<text x="48.6" y="993.8" font-size="25" fill="#1f1f1f" textLength="133.5" lengthAdjust="spacingAndGlyphs">Microwaves</text>
<text transform="translate(519.7 994.1999999999999) scale(1 1.065)" font-size="23.5" fill="#262626" text-anchor="end" font-family="'DejaVu Sans Mono', 'Liberation Mono', monospace">608</text>
<text transform="translate(719.4000000000001 994.1999999999999) scale(1 1.065)" font-size="23.5" fill="#262626" text-anchor="end" font-family="'DejaVu Sans Mono', 'Liberation Mono', monospace">629</text>
<text transform="translate(982.9000000000001 994.1999999999999) scale(1 1.065)" font-size="23.5" fill="#262626" text-anchor="end" font-family="'DejaVu Sans Mono', 'Liberation Mono', monospace">21</text>
<text transform="translate(1188.1000000000001 994.1999999999999) scale(1 1.065)" font-size="23.5" fill="#262626" text-anchor="end" font-family="'DejaVu Sans Mono', 'Liberation Mono', monospace">3</text>
<text transform="translate(1413.9 994.1999999999999) scale(1 1.065)" font-size="23.5" fill="#262626" text-anchor="end" font-family="'DejaVu Sans Mono', 'Liberation Mono', monospace">662</text>
<text x="48.6" y="1033.1299999999999" font-size="25" fill="#1f1f1f" textLength="72.5" lengthAdjust="spacingAndGlyphs">Lamps</text>
<text transform="translate(519.7 1033.53) scale(1 1.065)" font-size="23.5" fill="#262626" text-anchor="end" font-family="'DejaVu Sans Mono', 'Liberation Mono', monospace">272</text>
<text transform="translate(719.4000000000001 1033.53) scale(1 1.065)" font-size="23.5" fill="#262626" text-anchor="end" font-family="'DejaVu Sans Mono', 'Liberation Mono', monospace">988</text>
<text transform="translate(982.9000000000001 1033.53) scale(1 1.065)" font-size="23.5" fill="#262626" text-anchor="end" font-family="'DejaVu Sans Mono', 'Liberation Mono', monospace">717</text>
<text transform="translate(1188.1000000000001 1033.53) scale(1 1.065)" font-size="23.5" fill="#262626" text-anchor="end" font-family="'DejaVu Sans Mono', 'Liberation Mono', monospace">72</text>
<text transform="translate(1413.9 1033.53) scale(1 1.065)" font-size="23.5" fill="#262626" text-anchor="end" font-family="'DejaVu Sans Mono', 'Liberation Mono', monospace">935</text>
<text x="48.6" y="1072.4599999999998" font-size="25" fill="#1f1f1f" textLength="183.0" lengthAdjust="spacingAndGlyphs">Air Conditioners</text>
<text transform="translate(519.7 1072.86) scale(1 1.065)" font-size="23.5" fill="#262626" text-anchor="end" font-family="'DejaVu Sans Mono', 'Liberation Mono', monospace">269</text>
<text transform="translate(719.4000000000001 1072.86) scale(1 1.065)" font-size="23.5" fill="#262626" text-anchor="end" font-family="'DejaVu Sans Mono', 'Liberation Mono', monospace">600</text>
<text transform="translate(982.9000000000001 1072.86) scale(1 1.065)" font-size="23.5" fill="#262626" text-anchor="end" font-family="'DejaVu Sans Mono', 'Liberation Mono', monospace">331</text>
<text transform="translate(1188.1000000000001 1072.86) scale(1 1.065)" font-size="23.5" fill="#262626" text-anchor="end" font-family="'DejaVu Sans Mono', 'Liberation Mono', monospace">55</text>
<text transform="translate(1413.9 1072.86) scale(1 1.065)" font-size="23.5" fill="#262626" text-anchor="end" font-family="'DejaVu Sans Mono', 'Liberation Mono', monospace">421</text>
<text x="48.6" y="1111.79" font-size="25" fill="#1f1f1f" textLength="50.5" lengthAdjust="spacingAndGlyphs">Fans</text>
<text transform="translate(519.7 1112.19) scale(1 1.065)" font-size="23.5" fill="#262626" text-anchor="end" font-family="'DejaVu Sans Mono', 'Liberation Mono', monospace">252</text>
<text transform="translate(719.4000000000001 1112.19) scale(1 1.065)" font-size="23.5" fill="#262626" text-anchor="end" font-family="'DejaVu Sans Mono', 'Liberation Mono', monospace">185</text>
<text transform="translate(982.9000000000001 1112.19) scale(1 1.065)" font-size="23.5" fill="#262626" text-anchor="end" font-family="'DejaVu Sans Mono', 'Liberation Mono', monospace">-67</text>
<text transform="translate(1188.1000000000001 1112.19) scale(1 1.065)" font-size="23.5" fill="#262626" text-anchor="end" font-family="'DejaVu Sans Mono', 'Liberation Mono', monospace">-36</text>
<text transform="translate(1413.9 1112.19) scale(1 1.065)" font-size="23.5" fill="#262626" text-anchor="end" font-family="'DejaVu Sans Mono', 'Liberation Mono', monospace">513</text>
<text x="48.6" y="1151.12" font-size="25" fill="#1f1f1f" textLength="225.3" lengthAdjust="spacingAndGlyphs">Bluetooth Headph…</text>
<text transform="translate(719.4000000000001 1151.52) scale(1 1.065)" font-size="23.5" fill="#262626" text-anchor="end" font-family="'DejaVu Sans Mono', 'Liberation Mono', monospace">265</text>
<text transform="translate(982.9000000000001 1151.52) scale(1 1.065)" font-size="23.5" fill="#262626" text-anchor="end" font-family="'DejaVu Sans Mono', 'Liberation Mono', monospace">265</text>
<text transform="translate(1188.1000000000001 1151.52) scale(1 1.065)" font-size="23.5" fill="#262626" text-anchor="end" font-family="'DejaVu Sans Mono', 'Liberation Mono', monospace">100</text>
<text transform="translate(1413.9 1151.52) scale(1 1.065)" font-size="23.5" fill="#262626" text-anchor="end" font-family="'DejaVu Sans Mono', 'Liberation Mono', monospace">692</text>
<text x="48.6" y="1190.4499999999998" font-size="25" fill="#1f1f1f" textLength="156.0" lengthAdjust="spacingAndGlyphs">Boxed Games</text>
<text transform="translate(719.4000000000001 1190.85) scale(1 1.065)" font-size="23.5" fill="#262626" text-anchor="end" font-family="'DejaVu Sans Mono', 'Liberation Mono', monospace">10</text>
<text transform="translate(982.9000000000001 1190.85) scale(1 1.065)" font-size="23.5" fill="#262626" text-anchor="end" font-family="'DejaVu Sans Mono', 'Liberation Mono', monospace">10</text>
<text transform="translate(1188.1000000000001 1190.85) scale(1 1.065)" font-size="23.5" fill="#262626" text-anchor="end" font-family="'DejaVu Sans Mono', 'Liberation Mono', monospace">100</text>
<text transform="translate(1413.9 1190.85) scale(1 1.065)" font-size="23.5" fill="#262626" text-anchor="end" font-family="'DejaVu Sans Mono', 'Liberation Mono', monospace">328</text>
<text x="48.6" y="1229.7799999999997" font-size="25" fill="#1f1f1f" textLength="136.5" lengthAdjust="spacingAndGlyphs">Camcorders</text>
<text transform="translate(719.4000000000001 1230.1799999999998) scale(1 1.065)" font-size="23.5" fill="#262626" text-anchor="end" font-family="'DejaVu Sans Mono', 'Liberation Mono', monospace">2,049</text>
<text transform="translate(982.9000000000001 1230.1799999999998) scale(1 1.065)" font-size="23.5" fill="#262626" text-anchor="end" font-family="'DejaVu Sans Mono', 'Liberation Mono', monospace">2,049</text>
<text transform="translate(1188.1000000000001 1230.1799999999998) scale(1 1.065)" font-size="23.5" fill="#262626" text-anchor="end" font-family="'DejaVu Sans Mono', 'Liberation Mono', monospace">100</text>
<text transform="translate(1413.9 1230.1799999999998) scale(1 1.065)" font-size="23.5" fill="#262626" text-anchor="end" font-family="'DejaVu Sans Mono', 'Liberation Mono', monospace">642</text>
<text x="48.6" y="1269.11" font-size="25" fill="#1f1f1f" textLength="226.5" lengthAdjust="spacingAndGlyphs">Cameras &amp; Camco…</text>
<text transform="translate(719.4000000000001 1269.51) scale(1 1.065)" font-size="23.5" fill="#262626" text-anchor="end" font-family="'DejaVu Sans Mono', 'Liberation Mono', monospace">161</text>
<text transform="translate(982.9000000000001 1269.51) scale(1 1.065)" font-size="23.5" fill="#262626" text-anchor="end" font-family="'DejaVu Sans Mono', 'Liberation Mono', monospace">161</text>
<text transform="translate(1188.1000000000001 1269.51) scale(1 1.065)" font-size="23.5" fill="#262626" text-anchor="end" font-family="'DejaVu Sans Mono', 'Liberation Mono', monospace">100</text>
<text transform="translate(1413.9 1269.51) scale(1 1.065)" font-size="23.5" fill="#262626" text-anchor="end" font-family="'DejaVu Sans Mono', 'Liberation Mono', monospace">453</text>
<text x="48.6" y="1308.4399999999998" font-size="25" fill="#1f1f1f" textLength="110.3" lengthAdjust="spacingAndGlyphs">Car Video</text>
<text transform="translate(719.4000000000001 1308.84) scale(1 1.065)" font-size="23.5" fill="#262626" text-anchor="end" font-family="'DejaVu Sans Mono', 'Liberation Mono', monospace">1,360</text>
<text transform="translate(982.9000000000001 1308.84) scale(1 1.065)" font-size="23.5" fill="#262626" text-anchor="end" font-family="'DejaVu Sans Mono', 'Liberation Mono', monospace">1,360</text>
<text transform="translate(1188.1000000000001 1308.84) scale(1 1.065)" font-size="23.5" fill="#262626" text-anchor="end" font-family="'DejaVu Sans Mono', 'Liberation Mono', monospace">100</text>
<text transform="translate(1413.9 1308.84) scale(1 1.065)" font-size="23.5" fill="#262626" text-anchor="end" font-family="'DejaVu Sans Mono', 'Liberation Mono', monospace">680</text>
</g>
<g id="selection">
<rect x="733.5" y="434.4" width="260.5" height="900" fill="none" stroke="#1a7fd6" stroke-width="1.8" clip-path="url(#clipSel)"/>
<g clip-path="url(#clipSel)"><rect x="721.4" y="424.6" width="282.4" height="891.5" rx="5.5" fill="none" stroke="#000" stroke-opacity="0.26" stroke-width="6.5" filter="url(#blur2)"/></g>
<rect x="721.4" y="424.6" width="282.4" height="891.5" rx="5.5" fill="none" stroke="#000" stroke-opacity="0.07" stroke-width="5" filter="url(#blur3)"/>
<rect x="721.4" y="424.6" width="282.4" height="891.5" rx="5.5" fill="none" stroke="#fb1c1c" stroke-width="1.8"/>
</g>
<rect x="0.00" y="1318.60" width="1776.00" height="6.00" fill="#cdcdcd" />
</svg>
</body>
</html>
